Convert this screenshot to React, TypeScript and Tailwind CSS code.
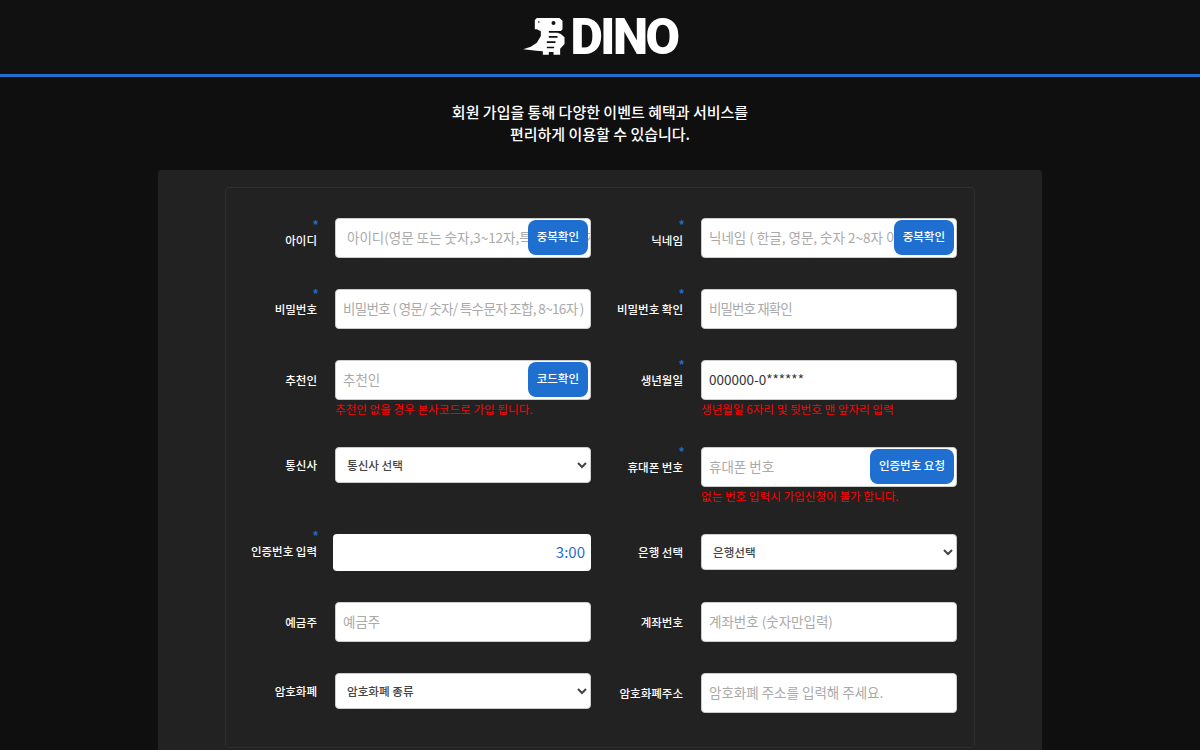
import type { ReactNode } from 'react'

const font = { fontFamily: '"Noto Sans CJK KR", "Noto Sans", sans-serif' }

// ── Logo ───────────────────────────────────────────────────────────────────────

function DinoMark() {
  return (
    <svg viewBox="15 18 125 111" className="w-[42px] h-[37px] shrink-0 mb-[1px]" aria-hidden="true">
      <path
        fill="#fff"
        d="M56 18H124L133 26V52L128 57H92V62H118L128 66L139 76V96L126 110V128H106V120H92V128H74V118L55 116L15 112L38 104L56 92L68 72V58L56 52H50V24Z"
      />
      <circle cx="106" cy="33" r="6" fill="#111" />
      <circle cx="62" cy="30" r="2.5" fill="#111" />
      <path fill="#111" d="M92 72H118V77H92ZM86 88H112V93H86ZM86 104H108V109H86Z" />
    </svg>
  )
}

// ── Form parts ─────────────────────────────────────────────────────────────────

function Star() {
  return (
    <span className="absolute right-[-1px] top-[-14px] text-xs font-bold leading-[13px] text-[#1e6fd0]" style={{ fontFamily: '"Liberation Sans", sans-serif' }}>
      *
    </span>
  )
}

function Field({ label, required, children, note, labelTop = 'pt-[13.5px]' }: { label: string; required?: boolean; children: ReactNode; note?: string; labelTop?: string }) {
  return (
    <div className="flex">
      <div className={`flex-1 flex justify-end pr-[18px] ${labelTop}`}>
        <label className="relative h-fit text-[11.5px] font-medium leading-[14px] text-white">
          {label}
          {required && <Star />}
        </label>
      </div>
      <div className="w-[256px] shrink-0">
        {children}
        {note && <p className="h-4 text-[11.6px] leading-[18px] text-[#f00] whitespace-nowrap">{note}</p>}
      </div>
    </div>
  )
}

function TextInput({ placeholder, button, pad = 'pl-[7px]', tight = '', value }: { placeholder?: string; button?: string; pad?: string; tight?: string; value?: string }) {
  return (
    <div className="relative h-10 rounded bg-white border border-[#ccc] overflow-hidden">
      <input
        readOnly
        value={value}
        placeholder={placeholder}
        className={`w-full h-full pb-[2px] text-[13.5px] text-[#333] placeholder:text-[#aaa] outline-none bg-transparent ${pad} ${tight}`}
      />
      {button && (
        <button className="absolute right-[2px] top-[1px] h-[35px] px-[9px] rounded-lg bg-[#1e6fd0] text-[11.5px] font-medium text-white whitespace-nowrap">
          {button}
        </button>
      )}
    </div>
  )
}

function SelectInput({ value }: { value: string }) {
  return (
    <select className="block w-full h-9 rounded bg-white border border-[#ccc] pl-[7px] text-[11.6px] font-medium text-[#444]">
      <option>{value}</option>
    </select>
  )
}

// ── Page ───────────────────────────────────────────────────────────────────────

export default function App() {
  return (
    <div className="h-screen overflow-hidden bg-[#0f0f0f] text-white" style={font}>
      <header className="h-[77px] bg-[#111] border-b-[3px] border-[#1e6fd0] flex items-center justify-center gap-[5px] pl-[1px]">
        <DinoMark />
        <span className="text-[50px] font-black leading-none tracking-[-2.5px]" style={{ fontFamily: 'Roboto, sans-serif' }}>
          DINO
        </span>
      </header>

      <p className="mt-[24px] text-center text-[15px] font-medium leading-[22px]">
        회원 가입을 통해 다양한 이벤트 혜택과 서비스를
        <br />
        편리하게 이용할 수 있습니다.
      </p>

      <main className="mt-[25px] mx-auto w-[884px] bg-[#222] rounded pt-[17px] pb-8">
        <div className="mx-auto w-[750px] h-[561px] border border-[#2e2e2e] rounded pt-[29.5px]">
          <div className="-ml-px w-[732px] grid grid-cols-2 gap-y-[31px]">
            <Field label="아이디" required labelTop="pt-[15px]">
              <TextInput placeholder="아이디(영문 또는 숫자,3~12자,특수문자 불가)" button="중복확인" pad="pl-[11px]" />
            </Field>
            <Field label="닉네임" required labelTop="pt-[15px]">
              <TextInput placeholder="닉네임 ( 한글, 영문, 숫자 2~8자 이내 )" button="중복확인" />
            </Field>

            <Field label="비밀번호" required>
              <TextInput placeholder="비밀번호 ( 영문/ 숫자/ 특수문자 조합, 8~16자 )" tight="tracking-[-0.65px]" />
            </Field>
            <Field label="비밀번호 확인" required>
              <TextInput placeholder="비밀번호 재확인" tight="tracking-[-0.9px]" />
            </Field>

            <Field label="추천인" note="추천인 없을 경우 본사코드로 가입 됩니다.">
              <TextInput placeholder="추천인" button="코드확인" />
            </Field>
            <Field label="생년월일" required note="생년월일 6자리 및 뒷번호 맨 앞자리 입력">
              <TextInput value="000000-0******" />
            </Field>

            <Field label="통신사" labelTop="pt-[11.5px]">
              <SelectInput value="통신사 선택" />
            </Field>
            <Field label="휴대폰 번호" required note="없는 번호 입력시 가입신청이 불가 합니다.">
              <TextInput placeholder="휴대폰 번호" button="인증번호 요청" />
            </Field>

            <div className="flex">
              <div className="flex-1 flex justify-end pr-[16px] pt-[10px]">
                <label className="relative h-fit text-[11.5px] font-medium leading-[14px] text-white">
                  인증번호 입력
                  <Star />
                </label>
              </div>
              <div className="w-[258px] shrink-0 h-[37px] rounded bg-white flex items-center justify-end pr-[6px] text-[15px] text-[#1e6fd0]">
                3:00
              </div>
            </div>
            <Field label="은행 선택" labelTop="pt-[11.5px]">
              <SelectInput value="은행선택" />
            </Field>

            <Field label="예금주">
              <TextInput placeholder="예금주" />
            </Field>
            <Field label="계좌번호">
              <TextInput placeholder="계좌번호 (숫자만입력)" />
            </Field>

            <Field label="암호화폐" labelTop="pt-[11.5px]">
              <SelectInput value="암호화폐 종류" />
            </Field>
            <Field label="암호화폐주소">
              <TextInput placeholder="암호화폐 주소를 입력해 주세요." />
            </Field>
          </div>
        </div>
      </main>
    </div>
  )
}
